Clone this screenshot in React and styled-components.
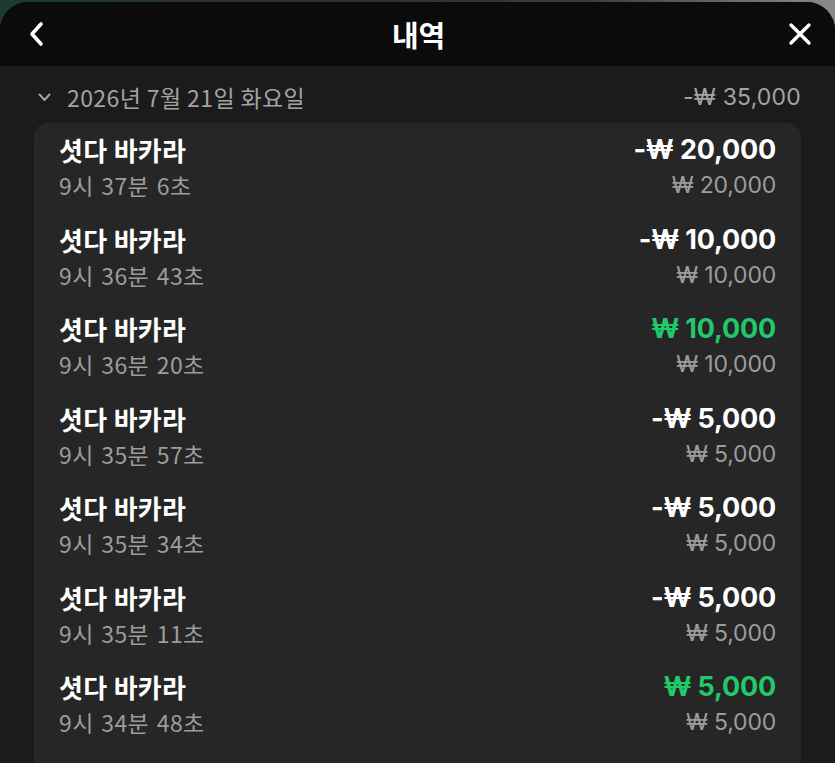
import React from "react";
import styled, { createGlobalStyle } from "styled-components";

const GlobalStyle = createGlobalStyle`
  html, body {
    margin: 0;
    padding: 0;
    background: #1b1b1b;
  }
  body {
    font-family: "Noto Sans CJK KR", "Noto Sans", sans-serif;
  }
`;

const Backdrop = styled.div`
  width: 835px;
  height: 763px;
  overflow: hidden;
  padding-top: 2px;
  box-sizing: border-box;
  background: linear-gradient(90deg, #1d3a33 0%, #2a2f2c 40%, #3b3b3b 70%, #8a8a8a 100%);
`;

const Sheet = styled.div`
  height: 100%;
  background: #1b1b1b;
  border-radius: 28px 28px 0 0;
  overflow: hidden;
  display: flex;
  flex-direction: column;
`;

const Header = styled.div`
  height: 64px;
  flex-shrink: 0;
  background: #0b0b0b;
  display: flex;
  align-items: center;
  justify-content: space-between;
  padding: 0 22px 0 24px;
`;

const IconButton = styled.button`
  width: 26px;
  height: 26px;
  padding: 0;
  border: none;
  background: none;
  display: flex;
  align-items: center;
  justify-content: center;
  color: #fff;
`;

const Title = styled.h1`
  margin: 0;
  font-size: 29px;
  font-weight: 700;
  color: #fff;
  letter-spacing: -0.3px;
`;

const Body = styled.div`
  flex: 1;
  padding: 14px 34px 0 34px;
  display: flex;
  flex-direction: column;
  gap: 9px;
`;

const DateRow = styled.div`
  height: 34px;
  display: flex;
  align-items: center;
  justify-content: space-between;
  padding: 0 0 0 4px;
  color: #a3a3a3;
  font-size: 23px;
  letter-spacing: 0.4px;
`;

const DateLabel = styled.div`
  display: flex;
  align-items: center;
  gap: 16px;
`;

const DateTotal = styled.span`
  font-family: "Inter", "Noto Sans", sans-serif;
  font-size: 23px;
  font-weight: 400;
  letter-spacing: 0.2px;
`;

const Card = styled.div`
  flex: 1;
  background: #262626;
  border-radius: 14px 14px 0 0;
  padding: 10px 25px 0 25px;
  display: flex;
  flex-direction: column;
  gap: 22.5px;
`;

const Row = styled.div`
  display: flex;
  justify-content: space-between;
`;

const Col = styled.div`
  display: flex;
  flex-direction: column;
  align-items: ${(p) => (p.$right ? "flex-end" : "flex-start")};
`;

const Name = styled.div`
  height: 34px;
  line-height: 34px;
  font-size: 26px;
  font-weight: 700;
  color: #fff;
  letter-spacing: 0.3px;
`;

const Time = styled.div`
  margin-top: 3px;
  height: 30px;
  line-height: 30px;
  font-size: 23px;
  color: #9c9c9c;
  letter-spacing: 0.4px;
  word-spacing: 2px;
`;

const Amount = styled.div`
  height: 34px;
  line-height: 34px;
  font-family: "Inter", "Noto Sans", sans-serif;
  font-size: 27px;
  font-weight: 700;
  color: ${(p) => (p.$plus ? "#22c96b" : "#fff")};
  letter-spacing: -0.2px;
`;

const SubAmount = styled.div`
  margin-top: 3px;
  height: 30px;
  line-height: 30px;
  font-family: "Inter", "Noto Sans", sans-serif;
  font-size: 23px;
  font-weight: 400;
  color: #9c9c9c;
  letter-spacing: -0.2px;
`;

const items = [
  { time: "9시 37분 6초", amount: 20000, plus: false },
  { time: "9시 36분 43초", amount: 10000, plus: false },
  { time: "9시 36분 20초", amount: 10000, plus: true },
  { time: "9시 35분 57초", amount: 5000, plus: false },
  { time: "9시 35분 34초", amount: 5000, plus: false },
  { time: "9시 35분 11초", amount: 5000, plus: false },
  { time: "9시 34분 48초", amount: 5000, plus: true },
];

const fmt = (n) => n.toLocaleString("en-US");

const App = () => {
  return (
    <>
      <GlobalStyle />
      <Backdrop>
        <Sheet>
          <Header>
            <IconButton aria-label="back">
              <svg width="18" height="26" viewBox="0 0 18 26" fill="none">
                <path d="M13 3 L4 13 L13 23" stroke="#fff" strokeWidth="3.6" strokeLinecap="round" strokeLinejoin="round" />
              </svg>
            </IconButton>
            <Title>내역</Title>
            <IconButton aria-label="close">
              <svg width="24" height="24" viewBox="0 0 24 24" fill="none">
                <path d="M3 3 L21 21 M21 3 L3 21" stroke="#fff" strokeWidth="3.4" strokeLinecap="round" />
              </svg>
            </IconButton>
          </Header>
          <Body>
            <DateRow>
              <DateLabel>
                <svg width="13" height="9" viewBox="0 0 13 9" fill="none">
                  <path d="M1.5 1.5 L6.5 7 L11.5 1.5" stroke="#a3a3a3" strokeWidth="2" strokeLinecap="round" strokeLinejoin="round" />
                </svg>
                <span>2026년 7월 21일 화요일</span>
              </DateLabel>
              <DateTotal>-₩ 35,000</DateTotal>
            </DateRow>
            <Card>
              {items.map((it, i) => (
                <Row key={i}>
                  <Col>
                    <Name>셧다 바카라</Name>
                    <Time>{it.time}</Time>
                  </Col>
                  <Col $right>
                    <Amount $plus={it.plus}>
                      {it.plus ? "" : "-"}₩ {fmt(it.amount)}
                    </Amount>
                    <SubAmount>₩ {fmt(it.amount)}</SubAmount>
                  </Col>
                </Row>
              ))}
            </Card>
          </Body>
        </Sheet>
      </Backdrop>
    </>
  );
};

export default App;
